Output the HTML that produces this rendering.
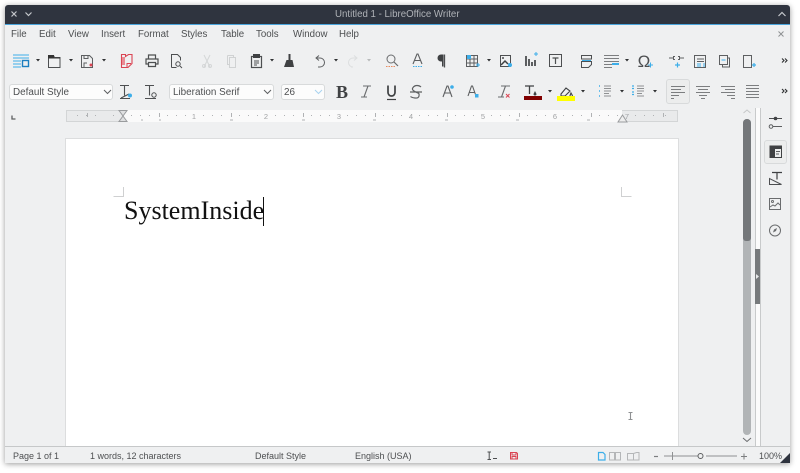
<!DOCTYPE html>
<html><head><meta charset="utf-8"><style>
html,body{margin:0;padding:0;background:#fff;width:800px;height:473px;overflow:hidden}
#w{position:absolute;left:5px;top:5px;width:785px;height:458px;background:#eff0f1;border-radius:3px 3px 0 0;box-shadow:0 1px 6px rgba(0,0,0,.4)}
.t{position:absolute;font-family:"Liberation Sans",sans-serif;white-space:nowrap;color:#4d4f51;line-height:12px;filter:blur(.3px)}
.m{font-size:9.7px;top:29px}
.s{font-size:9px;top:450px}
.b{position:absolute;background:#fcfcfc;border:1px solid #d8dadb;border-radius:3px;box-sizing:border-box}
svg{position:absolute;left:0;top:0;filter:blur(.35px)}
</style></head><body>
<div id="w"></div>
<div style="position:absolute;left:5px;top:5px;width:785px;height:19px;background:#2f343f;border-radius:3px 3px 0 0"></div>
<div style="position:absolute;left:5px;top:24px;width:785px;height:1px;background:#4aa5dc"></div>
<div class="t" style="left:335px;top:9px;font-size:9.7px;color:#b0b3b8">Untitled 1 - LibreOffice Writer</div>

<div class="t m" style="left:11px">File</div>
<div class="t m" style="left:39px">Edit</div>
<div class="t m" style="left:68px">View</div>
<div class="t m" style="left:101px">Insert</div>
<div class="t m" style="left:138px">Format</div>
<div class="t m" style="left:181px">Styles</div>
<div class="t m" style="left:221px">Table</div>
<div class="t m" style="left:256px">Tools</div>
<div class="t m" style="left:293px">Window</div>
<div class="t m" style="left:339px">Help</div>

<div class="b" style="left:9px;top:84px;width:104px;height:16px"></div>
<div class="t" style="left:13px;top:87px;font-size:9.9px">Default Style</div>
<div class="b" style="left:169px;top:84px;width:105px;height:16px"></div>
<div class="t" style="left:173px;top:87px;font-size:9.9px">Liberation Serif</div>
<div class="b" style="left:281px;top:84px;width:44px;height:16px"></div>
<div class="t" style="left:284px;top:87px;font-size:9.9px">26</div>
<div style="position:absolute;left:666px;top:79px;width:24px;height:25px;box-sizing:border-box;border:1px solid #d8dadb;border-radius:3px;background:#eceded"></div>

<!-- ruler -->
<div style="position:absolute;left:66px;top:110px;width:612px;height:12px;background:#e9eaeb;box-sizing:border-box;border:1px solid #d3d5d6"></div>
<div style="position:absolute;left:123px;top:110px;width:499px;height:12px;background:#fafafa"></div>

<!-- page -->
<div style="position:absolute;left:65px;top:138px;width:614px;height:308px;background:#dcddde"></div>
<div style="position:absolute;left:66px;top:139px;width:612px;height:307px;background:#fff"></div>
<div style="position:absolute;left:124px;top:196px;font-family:'Liberation Serif',serif;font-size:26px;line-height:30px;color:#111;white-space:nowrap">SystemInside</div>
<div style="position:absolute;left:263px;top:197px;width:1px;height:29px;background:#111"></div>

<!-- scrollbar + sidebar -->
<div style="position:absolute;left:743px;top:119px;width:8px;height:316px;background:#b1b4b6;border-radius:4px"></div>
<div style="position:absolute;left:743px;top:119px;width:8px;height:122px;background:#74777a;border-radius:4px 4px 3px 3px"></div>
<div style="position:absolute;left:755px;top:108px;width:1px;height:338px;background:#c8cacb"></div>
<div style="position:absolute;left:756px;top:108px;width:4px;height:338px;background:#fbfbfb"></div>
<div style="position:absolute;left:760px;top:108px;width:1px;height:338px;background:#c8cacb"></div>
<div style="position:absolute;left:755px;top:249px;width:5px;height:55px;background:#777a7c"></div>
<div style="position:absolute;left:764px;top:140px;width:23px;height:24px;box-sizing:border-box;border:1px solid #d8dadb;border-radius:3px;background:#eceded"></div>

<!-- status -->
<div style="position:absolute;left:5px;top:446px;width:785px;height:1px;background:#c6c8c9"></div>
<div class="t s" style="left:13px">Page 1 of 1</div>
<div class="t s" style="left:90px">1 words, 12 characters</div>
<div class="t s" style="left:255px">Default Style</div>
<div class="t s" style="left:355px">English (USA)</div>
<div class="t s" style="left:759px">100%</div>

<svg width="800" height="473" viewBox="0 0 800 473" fill="none" stroke-width="1">
<!-- title icons -->
<g stroke="#c5c8cc" stroke-width="1.2">
<path d="M11.500 11.500l5 5M16.500 11.500l-5 5"/>
<path d="M25.500 12.500l3 3 3-3"/>
<path d="M778.500 16l3.500-3.500 3.500 3.500"/>
</g>
<path d="M778.500 31.500l5 5M783.500 31.500l-5 5" stroke="#8e9193"/>

<!-- dropdown arrows -->
<g fill="#2f3133" stroke="none">
<path d="M36 59h4l-2 2.500zM69 59h4l-2 2.500zM102 59h4l-2 2.500zM270 59h4l-2 2.500zM334 59h4l-2 2.500zM487 59h4l-2 2.500zM625 59h4l-2 2.500zM548 90h4l-2 2.500zM581 90h4l-2 2.500zM620 90h4l-2 2.500zM653 90h4l-2 2.500z"/>
</g>
<path d="M367 59h4l-2 2.500z" fill="#b8babb"/>

<!-- row1 -->
<path d="M13 55h16M13 58h16M13 61h8M13 64h8M13 67h8" stroke="#3daee9"/>
<rect x="22.500" y="60.500" width="6" height="6" stroke="#1d7fc0" stroke-width="1.400"/>
<path d="M48.500 67.500v-12h5l1 2h5.500v10z" stroke="#4d4f51"/><path d="M48 55h6v3h-6z" fill="#333"/><path d="M48 58h12" stroke="#333"/>
<path d="M81.500 55.500h8l3 3v9h-11z" stroke="#5d5f61"/><path d="M84 55.500v3h4v-3M84 67v-4h3" stroke="#5d5f61"/><circle cx="91" cy="65" r="1.500" fill="#da4453"/>
<path d="M121.500 54.500h4v2l3-2h3.500v9l-4 4h-6.500z" stroke="#da4453" stroke-width="1.100"/><path d="M122 57h3v8h-3z" fill="#e98b94"/><path d="M127 67.500v-4h4" stroke="#da4453"/>
<path d="M148.500 59v-4h7v4M148.500 64h-2.500v-5h12v5h-2.500M148.500 62.500h7v4h-7z" stroke="#4d4f51" stroke-width="1.200"/>
<path d="M171.500 67.500v-13h6l3 3v3M171.500 67.500h5" stroke="#4d4f51"/><circle cx="178" cy="64" r="2.200" stroke="#4d4f51"/><path d="M180 66l2 2" stroke="#4d4f51"/>
<path d="M204 55l6 12M210 55l-6 12" stroke="#d4d6d7"/><circle cx="204" cy="66" r="1.500" stroke="#d4d6d7"/><circle cx="210" cy="66" r="1.500" stroke="#d4d6d7"/>
<path d="M227.500 55.500h6v2M227.500 55.500v9h2M229.500 57.500h6v10h-6z" stroke="#d0d2d3"/>
<rect x="251.500" y="56.500" width="10" height="11" stroke="#4d4f51" stroke-width="1.200"/><rect x="253" y="54" width="7" height="4" fill="#3f4143"/><path d="M254 61h5M254 63h5M254 65h3" stroke="#4d4f51"/>
<path d="M289.500 54v6" stroke="#3f4143" stroke-width="2"/><path d="M286.500 60h6l1.500 7h-10z" fill="#3f4143"/>
<path d="M319 55.500l-3 2.500 3 2.500M316 58h4a4.500 4.500 0 0 1 0 9h-2" stroke="#5d5f61"/>
<path d="M354 55.500l3 2.500-3 2.500M357 58h-4a4.500 4.500 0 0 0 0 9h-2" stroke="#dcdedf"/>
<circle cx="391" cy="59" r="4" stroke="#6a6c6e"/><path d="M394 62l4 4" stroke="#6a6c6e" stroke-width="1.200"/><path d="M386 66.500h10" stroke="#e98b60" stroke-dasharray="1.500 1"/>
<path d="M413 64l4-10h1l4 10M414.500 60.500h6" stroke="#5d5f61" stroke-width="1.100"/><path d="M413 66.500h10" stroke="#3daee9" stroke-dasharray="1.500 1"/>
<path d="M444.500 54.500v13" stroke="#4d4f51" stroke-width="1.300"/><path d="M444 54.500h-3a3.200 3.200 0 0 0 0 7h1v5h1.500v-12z" fill="#3f4143"/>
<rect x="466.500" y="55.500" width="11" height="11" stroke="#5d5f61"/><path d="M467 59h11M467 63h11M470 55v11M474 55v11" stroke="#5d5f61"/><rect x="467" y="55" width="4" height="4" fill="#3daee9"/><path d="M476 65h4M478 63v4" stroke="#3daee9"/>
<rect x="500.500" y="55.500" width="10" height="11" stroke="#4d4f51"/><path d="M501 65l4-4 3 3" stroke="#3f4143" stroke-width="1.500"/><circle cx="503" cy="58" r="1" fill="#4d4f51"/><circle cx="510" cy="65" r="2" fill="#3daee9"/>
<path d="M526 56v10M529 59v7M532 62v4M535 60v6" stroke="#4d4f51" stroke-width="1.800"/><path d="M534 54h4M536 52v4" stroke="#3daee9"/>
<rect x="549.500" y="54.500" width="12" height="12" stroke="#4d4f51"/><path d="M552.500 58h6M555.500 58v6" stroke="#4d4f51" stroke-width="1.200"/>
<path d="M581.500 55.500h10v3.500h-10zM581.500 61.500h10v3l-3 3h-7z" stroke="#4d4f51"/><path d="M582 60.500h9" stroke="#3daee9"/>
<path d="M604 55.500h15M604 58.500h15M604 61.500h15M604 64.500h15M604 67.500h8" stroke="#7c7e80"/><path d="M612 64h7" stroke="#3daee9" stroke-width="2"/>
<path d="M648 65h5M650.500 62.500v5" stroke="#3daee9"/>
<path d="M669 58h4M680 58h4M675 56.500h-1.500v3h1.500M678 56.500h1.500v3h-1.500" stroke="#5d5f61"/><path d="M675 65h5M677.500 62.500v5" stroke="#3daee9" stroke-width="1.200"/>
<path d="M694.500 67.500v-12h11v12z" stroke="#5d5f61"/><path d="M697 59h7M697 61.500h7" stroke="#5d5f61"/><path d="M697 64h4M697 66h4" stroke="#3daee9"/><path d="M704 63v4" stroke="#3daee9"/>
<path d="M719.500 64.500v-9h8v9h-8zM727.500 58h2v9h-7v-2.500" stroke="#5d5f61"/><path d="M721.500 60h4" stroke="#3daee9"/>
<path d="M743.500 67.500v-12h8v12z" stroke="#5d5f61"/><path d="M752 65h4M754 63v4" stroke="#3daee9" stroke-width="1.200"/>
<g stroke="#2f3133" stroke-width="1.100"><path d="M782 58.500l2 2-2 2M785 58.500l2 2-2 2M782 89l2 2-2 2M785 89l2 2-2 2"/></g>
<text x="644" y="67" font-family="Liberation Sans,sans-serif" font-size="17" fill="#4d4f51" text-anchor="middle" stroke="none">Ω</text>

<!-- combos chevrons -->
<path d="M104 90l3.500 3.500 3.500-3.500M264 90l3.500 3.500 3.500-3.500" stroke="#5d5f61"/>
<path d="M315 90l3.500 3.500 3.500-3.500" stroke="#a9d3ef"/>

<!-- row2 -->
<path d="M120 85.500h9M124.500 85.500v10M120 98.500h10M121 98l8-4" stroke="#4d4f51" stroke-width="1.100"/><circle cx="130" cy="95.500" r="2" fill="#3daee9"/>
<path d="M145 85.500h9M149.500 85.500v10M145 98.500h11" stroke="#4d4f51" stroke-width="1.100"/><circle cx="154" cy="95" r="2.200" stroke="#4d4f51"/>
<text x="342" y="98" font-family="Liberation Serif,serif" font-weight="bold" font-size="18" fill="#3f4143" text-anchor="middle" stroke="none">B</text>
<path d="M363 86h8M361 97h6M368 86l-4 11" stroke="#6a6c6e" stroke-width="1.100"/>
<path d="M388 85.500v7a3.500 3.500 0 0 0 7 0v-7" stroke="#3f4143" stroke-width="1.700"/><path d="M387 99.500h9" stroke="#3f4143" stroke-width="1.200"/>
<path d="M421 87.500q-1.500-1.500-4-1.500t-4 2 1 3.500 4 2 1 3-4 2-4.500-1.500M410 92.500h12" stroke="#5d5f61" stroke-width="1.200" transform="translate(0,-.5)"/>
<path d="M443 97l4-11h1l4 11M444.500 93h6" stroke="#5d5f61" stroke-width="1.100"/><circle cx="452" cy="87" r="1.800" fill="#3daee9"/>
<path d="M468 96l3.500-10h1l3.500 10M469.500 92.500h5" stroke="#5d5f61" stroke-width="1.100"/><rect x="475" y="94" width="3.500" height="3.500" fill="#3daee9"/>
<path d="M501 86h9M498 97h6M505.500 86l-4 11" stroke="#6a6c6e" stroke-width="1.100"/><path d="M506 94l3.500 3.500M509.500 94l-3.500 3.500" stroke="#da4453"/>
<path d="M525 86h9M529.500 86v8" stroke="#3f4143" stroke-width="1.300"/><path d="M535 91l-1.500 3a1.500 1.500 0 0 0 3 0z" fill="#3f4143"/>
<rect x="524" y="96" width="18" height="4" fill="#800000"/>
<path d="M561 94l5-6 4 3-5 5h-4zM571 93l-1 2.500a1.200 1.200 0 0 0 2.400 0z" stroke="#3f4143" stroke-width="1.100"/>
<rect x="557" y="96" width="18" height="5" fill="#ffff00"/>
<path d="M599 86h1M599 91h1M599 96h1" stroke="#3daee9" stroke-width="1.500"/><path d="M604 86h7M604 88.500h7M604 91h7M604 93.500h5M604 96h7" stroke="#8f9193"/>
<path d="M632 86h2M632 88.500h2M632 92h2M632 94.500h2" stroke="#3daee9" stroke-width="1.300"/><path d="M637 86h7M637 88.500h7M637 91h7M637 93.500h5M637 96h7" stroke="#8f9193"/>
<path d="M671 86.500h14M671 89.500h10M671 92.500h14M671 95.500h8M671 98.500h3" stroke="#7c7e80"/>
<path d="M696 86.500h14M698 89.500h10M696 92.500h14M699 95.500h8M701 98.500h4" stroke="#7c7e80"/>
<path d="M721 86.500h14M725 89.500h10M721 92.500h14M727 95.500h8M731 98.500h4" stroke="#7c7e80"/>
<path d="M746 85.500h13M746 88.500h13M746 91.500h13M746 94.500h13M746 97.500h13" stroke="#7c7e80"/>

<!-- ruler details -->
<path d="M12 115.500v3.500h3.500" stroke="#5d5f61" stroke-width="1.300"/>
<path d="M119 110.500h8l-4 5.500 4 5.500h-8l4-5.500z" fill="#dfe0e1" stroke="#9a9c9e"/>
<path d="M618 122h9l-4.500-7z" fill="#eee" stroke="#9a9c9e"/>
<g stroke="#b0b2b4">
<path d="M77.500 115v1M86.500 115v1M95.500 115v1M113.500 115v1M131.500 115v1M140.500 115v1M149.500 115v1M167.500 115v1M176.500 115v1M185.500 115v1M203.500 115v1M212.500 115v1M221.500 115v1M239.500 115v1M248.500 115v1M257.500 115v1M275.500 115v1M284.500 115v1M293.500 115v1M311.500 115v1M320.500 115v1M329.500 115v1M347.500 115v1M356.500 115v1M365.500 115v1M383.500 115v1M392.500 115v1M401.500 115v1M419.500 115v1M428.500 115v1M437.500 115v1M455.500 115v1M464.500 115v1M473.500 115v1M491.500 115v1M500.500 115v1M509.500 115v1M527.500 115v1M536.500 115v1M545.500 115v1M563.500 115v1M572.500 115v1M581.500 115v1M599.500 115v1M608.500 115v1M617.500 115v1M635.500 115v1M644.500 115v1M653.500 115v1M665.500 115v1"/>
<path d="M87.500 113v4M159.500 113v4M231.500 113v4M303.500 113v4M375.500 113v4M447.500 113v4M519.500 113v4M591.500 113v4M663.500 113v4"/>
<path d="M159 120h2M230 120h3M302 120h3M373 120h3M445 120h3M516 120h3M587 120h3M141 120h2"/>
</g>
<g font-family="Liberation Sans,sans-serif" font-size="7.500" fill="#a0a2a4" text-anchor="middle" stroke="none">
<text x="194" y="119">1</text><text x="266" y="119">2</text><text x="339" y="119">3</text><text x="411" y="119">4</text><text x="483" y="119">5</text><text x="555" y="119">6</text><text x="627" y="119">7</text>
</g>

<!-- page crop marks -->
<path d="M123.500 187v9.500h-10M621.500 187v9.500h10" stroke="#cfd0d1"/>
<!-- I-beam -->
<path d="M628.500 412.500h4M630.500 412.500v7M628.500 419.500h4" stroke="#8f9193" stroke-width="1.100"/>

<!-- scroll arrows -->
<path d="M743.500 113l3.500-3 3.500 3" stroke="#c5c7c8"/>
<path d="M743 438l4 3.500 4-3.500" stroke="#6a6c6e"/>
<path d="M756 274v5l3-2.500z" fill="#e9eaeb"/>

<!-- sidebar icons -->
<path d="M769 118.500h13" stroke="#4d4f51"/><circle cx="775.500" cy="118.500" r="1.800" fill="#3f4143"/>
<circle cx="771" cy="126.500" r="1.800" stroke="#5d5f61"/><path d="M773 126.500h9" stroke="#5d5f61"/>
<rect x="770" y="146" width="11.500" height="11.500" fill="none" stroke="#3f4143"/><rect x="770" y="146" width="12" height="3" fill="#3f4143"/><rect x="770" y="149" width="5" height="9" fill="#3f4143"/><path d="M776 151.500h4M776 154h3" stroke="#5d5f61"/>
<path d="M772 172.500h10M777 172.500v7" stroke="#3f4143" stroke-width="1.200"/><path d="M769.500 184.500v-6l12 6z" stroke="#4d4f51"/>
<rect x="769.500" y="198.500" width="11" height="11" stroke="#6a6c6e"/><circle cx="772.500" cy="201.500" r="1" stroke="#6a6c6e"/><path d="M770 207l3-2 2 1 3-3 2 2" stroke="#6a6c6e"/>
<circle cx="775" cy="230.500" r="5.500" stroke="#6a6c6e"/><path d="M773 232.500l1-3 3-1.500-1 3z" fill="#6a6c6e"/>

<!-- status icons -->
<path d="M487.500 452h3.500M489.200 452v7.500M487.500 459.500h3.500M493 458.500h4" stroke="#4d4f51"/>
<path d="M510.500 452.500h6l1 1v5.500h-7z" stroke="#da4453"/><path d="M512 452.500v2.500h4v-2.500M512 459v-2.500h4v2.500" stroke="#da4453"/>
<path d="M598.500 452.500h4.500l2 2v5.500h-6.500z" stroke="#3daee9" stroke-width="1.200"/>
<path d="M609.500 452.500h5v7.500h-5zM615.500 452.500h5v7.500h-5z" stroke="#b4b6b8"/>
<path d="M627.500 453.500h6v6.500h-6zM633.500 453.500l3-1h2.500v7.500h-5.500" stroke="#b4b6b8"/>
<path d="M654 456.500h4" stroke="#7c7e80" stroke-width="1.200"/>
<path d="M664 456h39M706 456h31" stroke="#8f9193"/><path d="M672.500 452v8" stroke="#8f9193"/>
<circle cx="700.500" cy="456" r="2.500" fill="#eff0f1" stroke="#5d5f61"/>
<path d="M741 456.500h6M744 453.500v6" stroke="#7c7e80"/>
<path d="M790 453v10h-10z" fill="#2f343f"/>
</svg>
</body></html>
